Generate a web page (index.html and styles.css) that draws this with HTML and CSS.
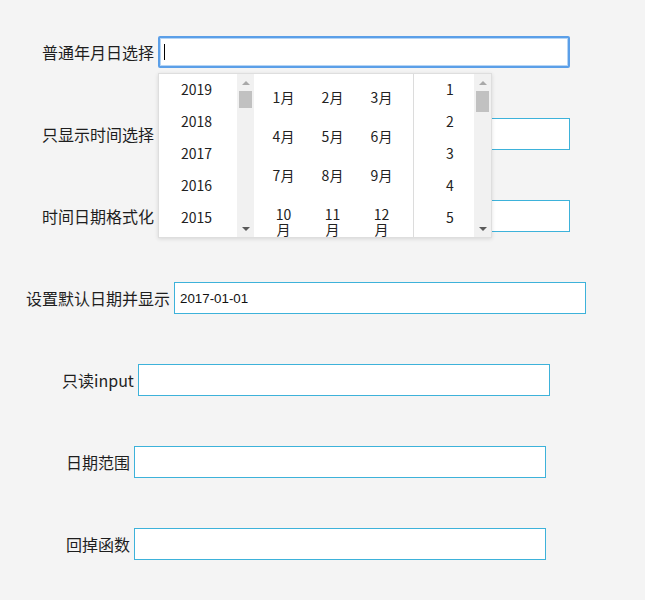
FILE: index.html
```html
<!DOCTYPE html>
<html lang="zh-CN">
<head>
<meta charset="utf-8">
<title>日期选择</title>
<link rel="stylesheet" href="styles.css">
</head>
<body>
<div class="form">
  <div class="row">
    <label class="label">普通年月日选择</label>
    <div class="field">
      <input class="input input-focus" type="text">
      <span class="caret"></span>
      <div class="picker">
        <div class="col-year">
          <ul class="list list-year">
            <li>2019</li><li>2018</li><li>2017</li><li>2016</li><li>2015</li>
          </ul>
          <div class="sb"><span class="sb-btn"><i class="arr-up"></i></span><span class="sb-thumb"></span><span class="sb-fill"></span><span class="sb-btn"><i class="arr-down"></i></span></div>
        </div>
        <div class="col-month">
          <span class="m">1月</span><span class="m">2月</span><span class="m">3月</span>
          <span class="m">4月</span><span class="m">5月</span><span class="m">6月</span>
          <span class="m">7月</span><span class="m">8月</span><span class="m">9月</span>
          <span class="m">10月</span><span class="m">11月</span><span class="m">12月</span>
        </div>
        <div class="col-day">
          <ul class="list list-day">
            <li>1</li><li>2</li><li>3</li><li>4</li><li>5</li>
          </ul>
          <div class="sb"><span class="sb-btn"><i class="arr-up"></i></span><span class="sb-thumb sb-thumb-day"></span><span class="sb-fill"></span><span class="sb-btn"><i class="arr-down"></i></span></div>
        </div>
      </div>
    </div>
  </div>
  <div class="row">
    <label class="label">只显示时间选择</label>
    <div class="field"><input class="input" type="text"></div>
  </div>
  <div class="row">
    <label class="label">时间日期格式化</label>
    <div class="field"><input class="input" type="text"></div>
  </div>
  <div class="row">
    <label class="label">设置默认日期并显示</label>
    <div class="field"><input class="input" type="text" value="2017-01-01"></div>
  </div>
  <div class="row">
    <label class="label">只读input</label>
    <div class="field"><input class="input" type="text" readonly></div>
  </div>
  <div class="row">
    <label class="label">日期范围</label>
    <div class="field"><input class="input" type="text"></div>
  </div>
  <div class="row">
    <label class="label">回掉函数</label>
    <div class="field"><input class="input" type="text"></div>
  </div>
</div>
</body>
</html>
```

FILE: styles.css
```css
html, body {
  margin: 0;
  padding: 0;
  background: #f4f4f4;
}
body {
  font-family: "Noto Sans CJK SC", "Noto Sans", sans-serif;
  color: #222;
}
.form {
  width: 612px;
  padding-top: 36px;
}
.row {
  display: flex;
  justify-content: center;
  align-items: center;
  gap: 4px;
  height: 32px;
  margin-bottom: 50px;
}
.label {
  font-size: 16px;
  line-height: 32px;
  white-space: nowrap;
  color: #1e1e1e;
}
.field {
  position: relative;
  width: 412px;
  height: 32px;
}
.input {
  box-sizing: border-box;
  width: 412px;
  height: 32px;
  margin: 0;
  padding: 0 6px 0 5px;
  border: 1px solid #3db2da;
  background: #fff;
  font-family: "Liberation Sans", Arial, sans-serif;
  font-size: 13.333px;
  color: #111;
  outline: none;
  caret-color: transparent;
}
.input-focus {
  border: 2px solid #5b9fe8;
  border-radius: 2px;
  box-shadow: inset 0 0 0 1px #b6d5f5;
}
.caret {
  position: absolute;
  left: 6px;
  top: 8px;
  width: 1px;
  height: 16px;
  background: #000;
}
.picker {
  position: absolute;
  top: 37px;
  left: 0;
  z-index: 5;
  box-sizing: border-box;
  width: 334px;
  height: 165px;
  display: flex;
  overflow: hidden;
  background: #fff;
  border: 1px solid #dedede;
  box-shadow: 0 1px 4px rgba(0, 0, 0, 0.12);
  font-size: 14px;
  color: #222;
}
.col-year {
  display: flex;
  width: 95px;
  flex: none;
}
.list {
  list-style: none;
  margin: -1px 0 0 0;
  padding: 0;
  flex: 1;
  overflow: hidden;
}
.list li {
  height: 32px;
  line-height: 32px;
  text-align: center;
}
.list-year {
  padding-right: 3px;
}
.list-day {
  padding-left: 12px;
}
.sb {
  width: 17px;
  flex: none;
  display: flex;
  flex-direction: column;
  background: #f1f1f1;
}
.sb-btn {
  height: 17px;
  display: flex;
  align-items: center;
  justify-content: center;
  flex: none;
}
.arr-up {
  width: 0;
  height: 0;
  border-left: 4px solid transparent;
  border-right: 4px solid transparent;
  border-bottom: 4px solid #a8a8a8;
}
.arr-down {
  width: 0;
  height: 0;
  border-left: 4px solid transparent;
  border-right: 4px solid transparent;
  border-top: 4px solid #5a5a5a;
}
.sb-thumb {
  height: 17px;
  margin: 0 2px;
  background: #c1c1c1;
  flex: none;
}
.sb-thumb-day {
  height: 21px;
}
.sb-fill {
  flex: 1;
}
.col-month {
  box-sizing: border-box;
  width: 160px;
  flex: none;
  display: grid;
  grid-template-columns: repeat(3, 49px);
  grid-auto-rows: auto;
  row-gap: 24px;
  align-content: start;
  align-items: start;
  padding: 16px 6px 0 5px;
  border-right: 1px solid #dcdcdc;
  overflow: hidden;
}
.m {
  padding: 0 11px;
  line-height: 15px;
  text-align: center;
}
.col-day {
  display: flex;
  flex: 1;
}
```
